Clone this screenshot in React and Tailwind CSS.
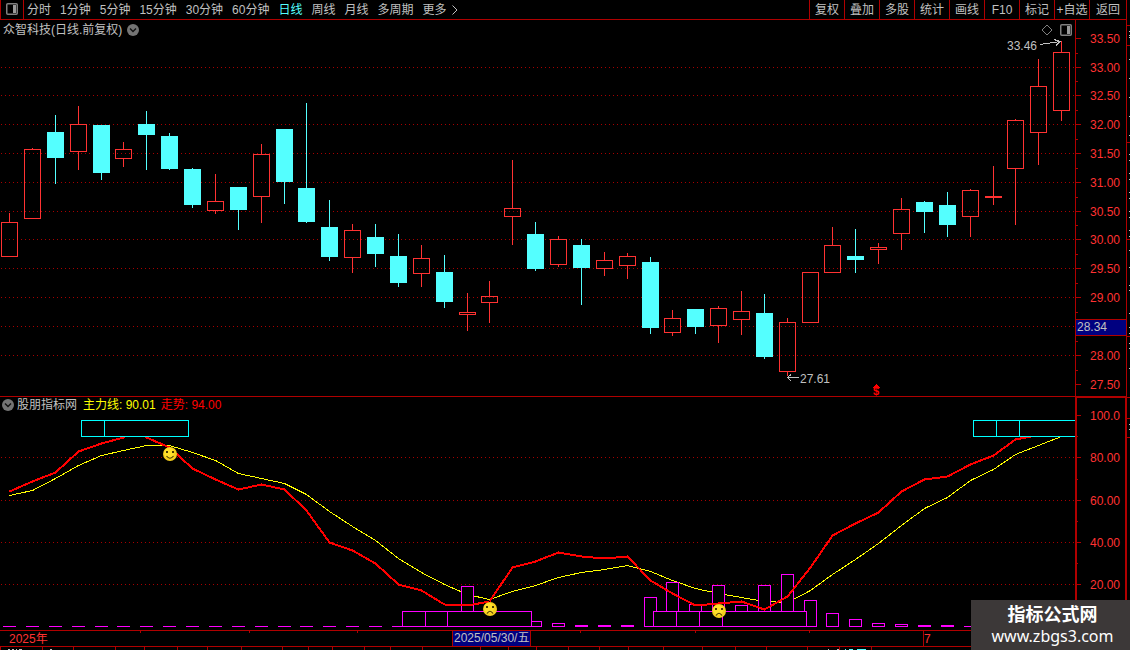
import React from 'react';

const PERIODS = ['分时', '1分钟', '5分钟', '15分钟', '30分钟', '60分钟', '日线', '周线', '月线', '多周期', '更多'];
const TOOLS = ['复权', '叠加', '多股', '统计', '画线', 'F10', '标记', '+自选'];

// [x, high, bodyTop, bodyBottom, low, direction]
const CANDLES = [
  [9, 213, 222, 257, 257, 'up'],
  [32, 148, 149, 219, 219, 'up'],
  [55, 115, 132, 158, 184, 'down'],
  [78, 106, 124, 152, 170, 'up'],
  [101, 125, 125, 173, 180, 'down'],
  [123, 142, 149, 159, 167, 'up'],
  [146, 111, 124, 135, 170, 'down'],
  [169, 133, 136, 169, 170, 'down'],
  [192, 168, 169, 205, 208, 'down'],
  [215, 174, 201, 211, 214, 'up'],
  [238, 187, 187, 210, 230, 'down'],
  [261, 144, 154, 197, 223, 'up'],
  [284, 129, 129, 182, 204, 'down'],
  [306, 103, 188, 222, 223, 'down'],
  [329, 200, 227, 257, 261, 'down'],
  [352, 224, 230, 258, 273, 'up'],
  [375, 224, 237, 254, 267, 'down'],
  [398, 234, 256, 283, 287, 'down'],
  [421, 245, 258, 274, 287, 'up'],
  [444, 255, 272, 302, 308, 'down'],
  [467, 293, 312, 315, 331, 'up'],
  [489, 281, 296, 303, 323, 'up'],
  [512, 160, 208, 217, 245, 'up'],
  [535, 222, 234, 269, 271, 'down'],
  [558, 236, 239, 265, 267, 'up'],
  [581, 239, 245, 268, 305, 'down'],
  [604, 252, 260, 269, 276, 'up'],
  [627, 253, 256, 266, 279, 'up'],
  [650, 257, 262, 328, 334, 'down'],
  [672, 310, 318, 333, 336, 'up'],
  [695, 309, 309, 327, 334, 'down'],
  [718, 306, 308, 326, 343, 'up'],
  [741, 291, 311, 320, 335, 'up'],
  [764, 294, 313, 357, 359, 'down'],
  [787, 318, 322, 372, 376, 'up'],
  [810, 272, 272, 323, 323, 'up'],
  [832, 227, 245, 273, 273, 'up'],
  [855, 229, 256, 260, 273, 'down'],
  [878, 243, 247, 250, 264, 'up'],
  [901, 198, 209, 234, 250, 'up'],
  [924, 201, 202, 212, 233, 'down'],
  [947, 192, 205, 225, 237, 'down'],
  [970, 189, 190, 217, 237, 'up'],
  [993, 166, 196, 198, 205, 'up'],
  [1015, 119, 120, 169, 225, 'up'],
  [1038, 59, 86, 133, 165, 'up'],
  [1061, 41, 52, 111, 121, 'up'],
];

const PRICE_TICKS = [
  [38, '33.50'], [67, '33.00'], [95, '32.50'], [124, '32.00'], [153, '31.50'], [182, '31.00'], [211, '30.50'],
  [239, '30.00'], [268, '29.50'], [297, '29.00'], [326, ''], [355, '28.00'], [384, '27.50'],
];
const PRICE_MINOR = [53, 81, 110, 139, 168, 197, 225, 254, 283, 312, 341, 370];

const IND_TICKS = [[415, '100.0'], [457, '80.00'], [500, '60.00'], [542, '40.00'], [584, '20.00']];
const IND_MINOR = [436, 479, 521, 563, 605];

const TREND =
  '9,491 32,481 55,472 78,451 101,443 123,437 130,433 140,433 146,437 169,447 192,468 215,479 238,489 261,484 284,489 ' +
  '306,510 329,542 352,550 375,563 398,584 421,590 444,604 467,605 489,601 512,567 535,561 558,552 581,556 604,558 ' +
  '627,556 650,580 672,593 695,605 718,603 741,601 764,609 787,596 810,567 832,535 855,523 878,512 901,491 924,479 ' +
  '947,476 970,464 993,455 1015,439 1030,436 1045,433';

const MAIN_FORCE =
  '9,495 32,490 55,478 78,465 101,455 123,450 146,445 169,445 192,452 215,460 238,473 261,478 284,483 306,494 ' +
  '329,511 352,526 375,540 398,558 421,572 444,584 467,594 489,599 512,591 535,585 558,577 581,572 604,569 627,565 ' +
  '650,571 672,580 695,588 718,593 741,597 764,601 787,602 810,590 832,574 855,559 878,543 901,525 924,508 947,497 ' +
  '970,480 993,469 1015,454 1038,445 1061,436';

// [x, top] of the histogram, all standing on y = 627
const BARS = [
  [467, 586], [535, 621], [558, 623], [581, 625], [604, 625], [627, 625], [650, 597], [672, 582], [695, 604],
  [718, 585], [741, 605], [764, 585], [787, 574], [810, 600], [832, 613], [855, 619], [878, 623], [901, 624],
  [924, 625], [947, 625],
];
const FLAT = [9, 32, 55, 78, 101, 123, 146, 169, 192, 215, 238, 261, 284, 306, 329, 352, 375, 398, 970, 993];

const MONTH_TICKS = [140, 249, 357, 580, 695, 809];
const TICKER_CELLS = [
  0, 42, 73, 115, 144, 177, 207, 241, 282, 308, 332, 364, 390, 422, 480, 508, 536, 568, 599, 628, 663, 702, 735, 766,
  807, 839, 871,
];

const EDGE_LINES = [25, 45, 142, 239, 336, 397, 418, 437];
const EDGE_MARKS = [
  31, 35, 37, 59, 78, 97, 116, 135, 154, 160, 173, 179, 192, 198, 211, 217, 230, 236, 250, 267, 285, 290, 313, 327,
  333, 343, 348, 368, 424, 429,
];

function Grid({ lines }) {
  return lines.map((y) => (
    <line key={y} x1="1" x2="1074" y1={y + 0.5} y2={y + 0.5} stroke="#a80000" strokeDasharray="1 3" />
  ));
}

function Candle({ data }) {
  const [x, high, top, bottom, low, dir] = data;
  const color = dir === 'up' ? '#ff3232' : '#54ffff';
  return (
    <g fill={color}>
      {top > high && <rect x={x} y={high} width="1" height={top - high} />}
      {low > bottom && <rect x={x} y={bottom} width="1" height={low - bottom} />}
      {dir === 'down' || bottom - top < 3 ? (
        <rect x={x - 8} y={top} width="17" height={bottom - top} />
      ) : (
        <rect x={x - 7.5} y={top + 0.5} width="16" height={bottom - top - 1} fill="none" stroke={color} />
      )}
    </g>
  );
}

function Face({ x, y, sad }) {
  return (
    <g transform={`translate(${x} ${y})`}>
      <circle r="7" fill="#f5cf1d" />
      <circle r="5" cx="-1" cy="-1" fill="#ffe02a" />
      <rect x="-4" y="-3" width="2" height="2" fill="#4a3a00" />
      <rect x="2" y="-3" width="2" height="2" fill="#4a3a00" />
      <path d={sad ? 'M-3 4.5Q0 0 3 4.5' : 'M-3.5 2Q0 6.5 3.5 2'} fill="none" stroke="#4a3a00" strokeWidth="1.2" />
    </g>
  );
}

function PanelIcon() {
  return (
    <svg width="12" height="12" viewBox="0 0 12 12" className="block">
      <rect x="0.75" y="0.75" width="10.5" height="10.5" rx="1" fill="none" stroke="#808080" strokeWidth="1.5" />
      <rect x="7" y="2" width="3" height="8" fill="#9a9a9a" />
    </svg>
  );
}

function DropButton({ label }) {
  return (
    <button aria-label={label} className="shrink-0">
      <svg width="12" height="12" viewBox="0 0 12 12" className="block">
        <circle cx="6" cy="6" r="6" fill="#747474" />
        <path d="M3 4.5L6 7.5L9 4.5" fill="none" stroke="#111" strokeWidth="1.4" />
      </svg>
    </button>
  );
}

function Axis({ ticks, minor }) {
  return (
    <g>
      {ticks.map(([y, label]) => (
        <g key={y}>
          <rect x="1076" y={y} width="5" height="1" fill="#b00000" />
          <text x="1090" y={y + 5} fill="#ff3232">{label}</text>
        </g>
      ))}
      {minor.map((y) => (
        <rect key={y} x="1076" y={y} width="2" height="1" fill="#b00000" />
      ))}
    </g>
  );
}

function TopBar() {
  return (
    <header className="flex h-5 items-stretch border-b border-[#b00000]">
      <button aria-label="侧栏" className="flex w-6 shrink-0 justify-center border-x border-[#b00000] pt-[3px]">
        <PanelIcon />
      </button>
      <nav className="flex flex-1 items-center gap-[9px] pl-[3px] whitespace-nowrap">
        {PERIODS.map((p) => (
          <button key={p} className={p === '日线' ? 'text-[#54ffff]' : ''}>{p}</button>
        ))}
        <svg width="6" height="10" viewBox="0 0 6 10" className="-ml-1">
          <path d="M0.5 0.5L5 5L0.5 9.5" fill="none" stroke="#c0c0c0" />
        </svg>
      </nav>
      {TOOLS.map((t) => (
        <button key={t} className="w-[35px] shrink-0 border-l border-[#b00000] whitespace-nowrap">{t}</button>
      ))}
      <button className="w-[37px] shrink-0 border-l border-[#b00000]">返回</button>
    </header>
  );
}

function PricePanel() {
  return (
    <section className="flex">
      <div className="relative min-w-0 flex-1">
        <svg viewBox="0 20 1075 376" preserveAspectRatio="none" className="block h-[376px] w-full" shapeRendering="crispEdges">
          <Grid lines={PRICE_TICKS.slice(1, -1).map((t) => t[0])} />
          {CANDLES.map((c) => (
            <Candle key={c[0]} data={c} />
          ))}
          <g fill="none" stroke="#c0c0c0">
            <path d="M1040 44.5L1060 41.5M1054 39.5L1060 41.5L1056 45.5" />
            <path d="M787 377.5H799M791 374.5L787.5 377.5L791 381" />
          </g>
          <text x="1007" y="50" fill="#c0c0c0">33.46</text>
          <text x="800" y="383" fill="#c0c0c0">27.61</text>
          <path d="M873 387.5L876.5 384L880 387.5Z" fill="#ff0000" />
          <text x="873" y="395" fill="#ff0000" className="text-[11px] font-bold">$</text>
        </svg>
        <div className="absolute top-0 left-[3px] flex h-5 items-center gap-[5px]">
          <h1>众智科技(日线.前复权)</h1>
          <DropButton label="股票菜单" />
        </div>
        <div className="absolute top-1 right-[3px] flex items-center gap-[7px]">
          <button aria-label="标记点">
            <svg width="12" height="12" viewBox="0 0 12 12" className="block">
              <path d="M6 1L11 6L6 11L1 6Z" fill="none" stroke="#808080" />
            </svg>
          </button>
          <button aria-label="面板">
            <PanelIcon />
          </button>
        </div>
      </div>
      <div className="w-[51px] shrink-0 border-l border-[#b00000]">
        <svg viewBox="1076 20 50 376" className="block h-[376px] w-full" shapeRendering="crispEdges">
          <Axis ticks={PRICE_TICKS} minor={PRICE_MINOR} />
          <rect x="1076" y="319" width="50" height="17" fill="#b00000" />
          <rect x="1076" y="320" width="50" height="15" fill="#000080" />
          <text x="1077" y="331" fill="#c0c0c0">28.34</text>
        </svg>
      </div>
    </section>
  );
}

function IndicatorPanel() {
  return (
    <section className="flex">
      <div className="relative min-w-0 flex-1 border-t border-[#b00000]">
        <svg viewBox="0 397 1075 233" preserveAspectRatio="none" className="block h-[233px] w-full" shapeRendering="crispEdges">
          <Grid lines={[457, 500, 542, 584]} />
          <polyline points={MAIN_FORCE} transform="translate(.5 .5)" fill="none" stroke="#ffff00" />
          {FLAT.map((x) => (
            <rect key={x} x={x - 6} y="626" width="13" height="1" fill="#ff00ff" />
          ))}
          <g fill="#000" stroke="#ff00ff">
            {BARS.map(([x, top]) => (
              <rect key={x} x={x - 5.5} y={top + 0.5} width="12" height={626 - top} />
            ))}
            <rect x="402.5" y="611.5" width="129" height="15" />
            <path d="M425.5 611V626M447.5 611V626" />
            <rect x="653.5" y="611.5" width="153" height="15" />
            <path d="M676.5 611V626M699.5 611V626M722.5 611V626" />
          </g>
          <polyline points={TREND} transform="translate(.5 .5)" fill="none" stroke="#ff0000" strokeWidth="2" />
          <g fill="#000" stroke="#00ffff">
            <rect x="81.5" y="420.5" width="107" height="16" />
            <path d="M104.5 420V436" />
            <rect x="973.5" y="420.5" width="110" height="16" />
            <path d="M996.5 420V436M1019.5 420V436" />
          </g>
          <g shapeRendering="auto">
            <Face x={170} y={454} />
            <Face x={490} y={609} sad />
            <Face x={719} y={611} sad />
          </g>
        </svg>
        <div className="absolute top-0 left-[2px] flex h-4 items-center whitespace-pre">
          <DropButton label="指标菜单" />
          <h2 className="ml-[3px]">股朋指标网</h2>
          <span className="ml-[6px] text-[#ffff00]">主力线: 90.01</span>
          <span className="ml-[5px] text-[#ff0000]">走势: 94.00</span>
        </div>
      </div>
      <div className="w-[51px] shrink-0 border-t-2 border-r border-l-2 border-[#b00000]">
        <svg viewBox="1077 398 48 232" className="block h-[232px] w-full" shapeRendering="crispEdges">
          <Axis ticks={IND_TICKS} minor={IND_MINOR} />
        </svg>
      </div>
    </section>
  );
}

function DateAxis() {
  return (
    <div className="border-y border-[#b00000]">
      <svg viewBox="0 631 1126 15" preserveAspectRatio="none" className="block h-[15px] w-full" shapeRendering="crispEdges">
        {MONTH_TICKS.map((x) => (
          <rect key={x} x={x} y="631" width="1" height="2" fill="#b00000" />
        ))}
        <text x="9" y="643" fill="#ff3232">2025年</text>
        <rect x="452" y="631" width="79" height="15" fill="#b00000" />
        <rect x="453" y="631" width="77" height="15" fill="#000080" />
        <text x="454" y="642" fill="#c0c0c0">2025/05/30/五</text>
        <rect x="923" y="631" width="1" height="15" fill="#b00000" />
        <text x="924" y="643" fill="#ff3232">7</text>
      </svg>
    </div>
  );
}

function TickerEdge() {
  return (
    <svg viewBox="0 647 1126 3" preserveAspectRatio="none" className="block h-[3px] w-full" shapeRendering="crispEdges">
      {TICKER_CELLS.map((x) => (
        <rect key={x} x={x} y="647" width="1" height="3" fill="#b00000" />
      ))}
      <path d="M8 649.5h2M12 649.5h2M16 649.5h1M19 649.5h3M50 649.5h2M828 649.5h1M837 649.5h2" stroke="#c0c0c0" />
      <path d="M845 649.5h1M849 649.5h4M857 649.5h9" stroke="#54ffff" />
    </svg>
  );
}

export default function App() {
  return (
    <div className="relative flex min-h-screen overflow-hidden bg-black font-['Liberation_Sans','Noto_Sans_CJK_SC',sans-serif] text-[12px] leading-4 text-[#c0c0c0]">
      <main className="min-w-0 flex-1 border-r border-[#b00000]">
        <TopBar />
        <PricePanel />
        <IndicatorPanel />
        <DateAxis />
        <TickerEdge />
      </main>
      <svg viewBox="1127 0 3 650" className="block h-[650px] w-[3px] shrink-0" shapeRendering="crispEdges">
        {EDGE_LINES.map((y) => (
          <rect key={y} x="1127" y={y} width="3" height="1" fill="#b00000" />
        ))}
        {EDGE_MARKS.map((y) => (
          <rect key={y} x="1129" y={y} width="1" height="1" fill="#c0c0c0" />
        ))}
      </svg>
      <div className="absolute right-0 bottom-0 flex h-[50px] w-[159px] flex-col items-center justify-center bg-[#3c3838] pl-1 text-white">
        <strong className="text-[18px] leading-[22px] font-bold">指标公式网</strong>
        <span className="font-['Noto_Sans',sans-serif] text-[16px] leading-5">www.zbgs3.com</span>
      </div>
    </div>
  );
}
